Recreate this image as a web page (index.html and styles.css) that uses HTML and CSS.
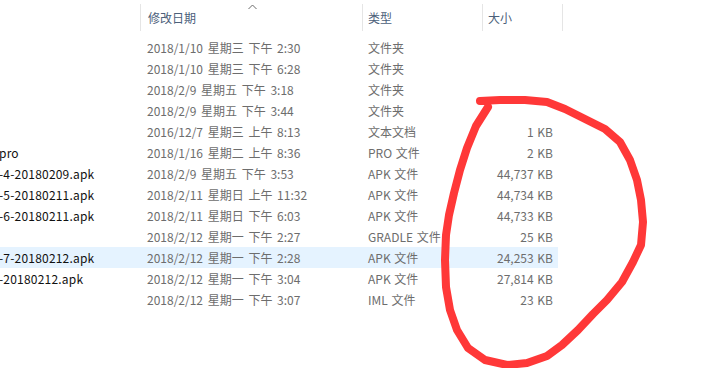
FILE: index.html
```html
<!DOCTYPE html>
<html lang="zh-CN">
<head>
<meta charset="utf-8">
<title>文件列表</title>
<link rel="stylesheet" href="styles.css">
</head>
<body>
<div class="explorer">
  <div class="header">
    <div class="hcell hname"></div>
    <div class="hcell hdate">修改日期
      <svg class="sort" width="9" height="6" viewBox="0 0 9 6"><polyline points="0.5,5 4.5,1 8.5,5" fill="none" stroke="#6a6a6a" stroke-width="1"/></svg>
    </div>
    <div class="hcell htype">类型</div>
    <div class="hcell hsize">大小</div>
  </div>
  <div class="rows">
    <div class="row"><span class="name"></span><span class="date">2018/1/10 星期三 下午 2:30</span><span class="type">文件夹</span><span class="size"></span></div>
    <div class="row"><span class="name"></span><span class="date">2018/1/10 星期三 下午 6:28</span><span class="type">文件夹</span><span class="size"></span></div>
    <div class="row"><span class="name"></span><span class="date">2018/2/9 星期五 下午 3:18</span><span class="type">文件夹</span><span class="size"></span></div>
    <div class="row"><span class="name"></span><span class="date">2018/2/9 星期五 下午 3:44</span><span class="type">文件夹</span><span class="size"></span></div>
    <div class="row"><span class="name"></span><span class="date">2016/12/7 星期三 上午 8:13</span><span class="type">文本文档</span><span class="size">1 KB</span></div>
    <div class="row"><span class="name">pro</span><span class="date">2018/1/16 星期二 上午 8:36</span><span class="type">PRO 文件</span><span class="size">2 KB</span></div>
    <div class="row"><span class="name">-4-20180209.apk</span><span class="date">2018/2/9 星期五 下午 3:53</span><span class="type">APK 文件</span><span class="size">44,737 KB</span></div>
    <div class="row"><span class="name">-5-20180211.apk</span><span class="date">2018/2/11 星期日 上午 11:32</span><span class="type">APK 文件</span><span class="size">44,734 KB</span></div>
    <div class="row"><span class="name">-6-20180211.apk</span><span class="date">2018/2/11 星期日 下午 6:03</span><span class="type">APK 文件</span><span class="size">44,733 KB</span></div>
    <div class="row"><span class="name"></span><span class="date">2018/2/12 星期一 下午 2:27</span><span class="type">GRADLE 文件</span><span class="size">25 KB</span></div>
    <div class="row hover"><span class="name">-7-20180212.apk</span><span class="date">2018/2/12 星期一 下午 2:28</span><span class="type">APK 文件</span><span class="size">24,253 KB</span></div>
    <div class="row"><span class="name">-20180212.apk</span><span class="date">2018/2/12 星期一 下午 3:04</span><span class="type">APK 文件</span><span class="size">27,814 KB</span></div>
    <div class="row"><span class="name"></span><span class="date">2018/2/12 星期一 下午 3:07</span><span class="type">IML 文件</span><span class="size">23 KB</span></div>
  </div>
  <svg class="scribble" width="703" height="368" viewBox="0 0 703 368">
    <path d="M480,101 L500,100 L525,100 L547,102 L565,109 L585,119 L605,129 L620,142 L630,160 L637,180 L641,200 L643,222 L641,245 L633,262 L622,282 L607,300 L593,314 L578,330 L562,345 L547,356 L527,363 L507,365 L485,360 L468,348 L457,330 L450,310 L446,287 L445,260 L446,235 L449,215 L454,193 L460,170 L467,148 L476,126 L488,107" fill="none" stroke="#ff3838" stroke-width="8" stroke-linecap="round" stroke-linejoin="round"/>
  </svg>
</div>
</body>
</html>
```

FILE: styles.css
```css
html, body {
  margin: 0;
  padding: 0;
  background: #ffffff;
}
body {
  width: 703px;
  height: 368px;
  overflow: hidden;
  font-family: "Noto Sans CJK SC", "Noto Sans", sans-serif;
  font-size: 12px;
}
.explorer {
  position: relative;
  width: 703px;
  height: 368px;
}
.header {
  display: flex;
  height: 37px;
  padding-top: 4px;
  box-sizing: border-box;
}
.hcell {
  height: 27px;
  line-height: 27px;
  color: #4c607a;
  padding-left: 7px;
  box-sizing: border-box;
  position: relative;
}
.hname {
  width: 140px;
  padding: 0;
}
.hdate {
  width: 222px;
  border-left: 1px solid #e5e5e5;
}
.htype {
  width: 120px;
  border-left: 1px solid #e5e5e5;
  padding-left: 5px;
}
.hsize {
  width: 81px;
  border-left: 1px solid #e5e5e5;
  border-right: 1px solid #e5e5e5;
  padding-left: 5px;
}
.sort {
  position: absolute;
  left: 107px;
  top: 0;
}
.rows {
  display: flex;
  flex-direction: column;
}
.row {
  display: grid;
  grid-template-columns: 140px 222px 120px 76px;
  width: 558px;
  height: 21px;
  line-height: 21px;
  white-space: nowrap;
}
.row.hover {
  background: #e5f3ff;
}
.name {
  color: #111111;
  margin-left: -1px;
  overflow: hidden;
  letter-spacing: 0.2px;
}
.date {
  color: #6d6d6d;
  padding-left: 7px;
  word-spacing: 2px;
}
.type {
  color: #6d6d6d;
  padding-left: 6px;
  word-spacing: 1px;
}
.size {
  color: #6d6d6d;
  text-align: right;
  padding-right: 5px;
  word-spacing: 1px;
}
.scribble {
  position: absolute;
  left: 0;
  top: 0;
  pointer-events: none;
}
```
